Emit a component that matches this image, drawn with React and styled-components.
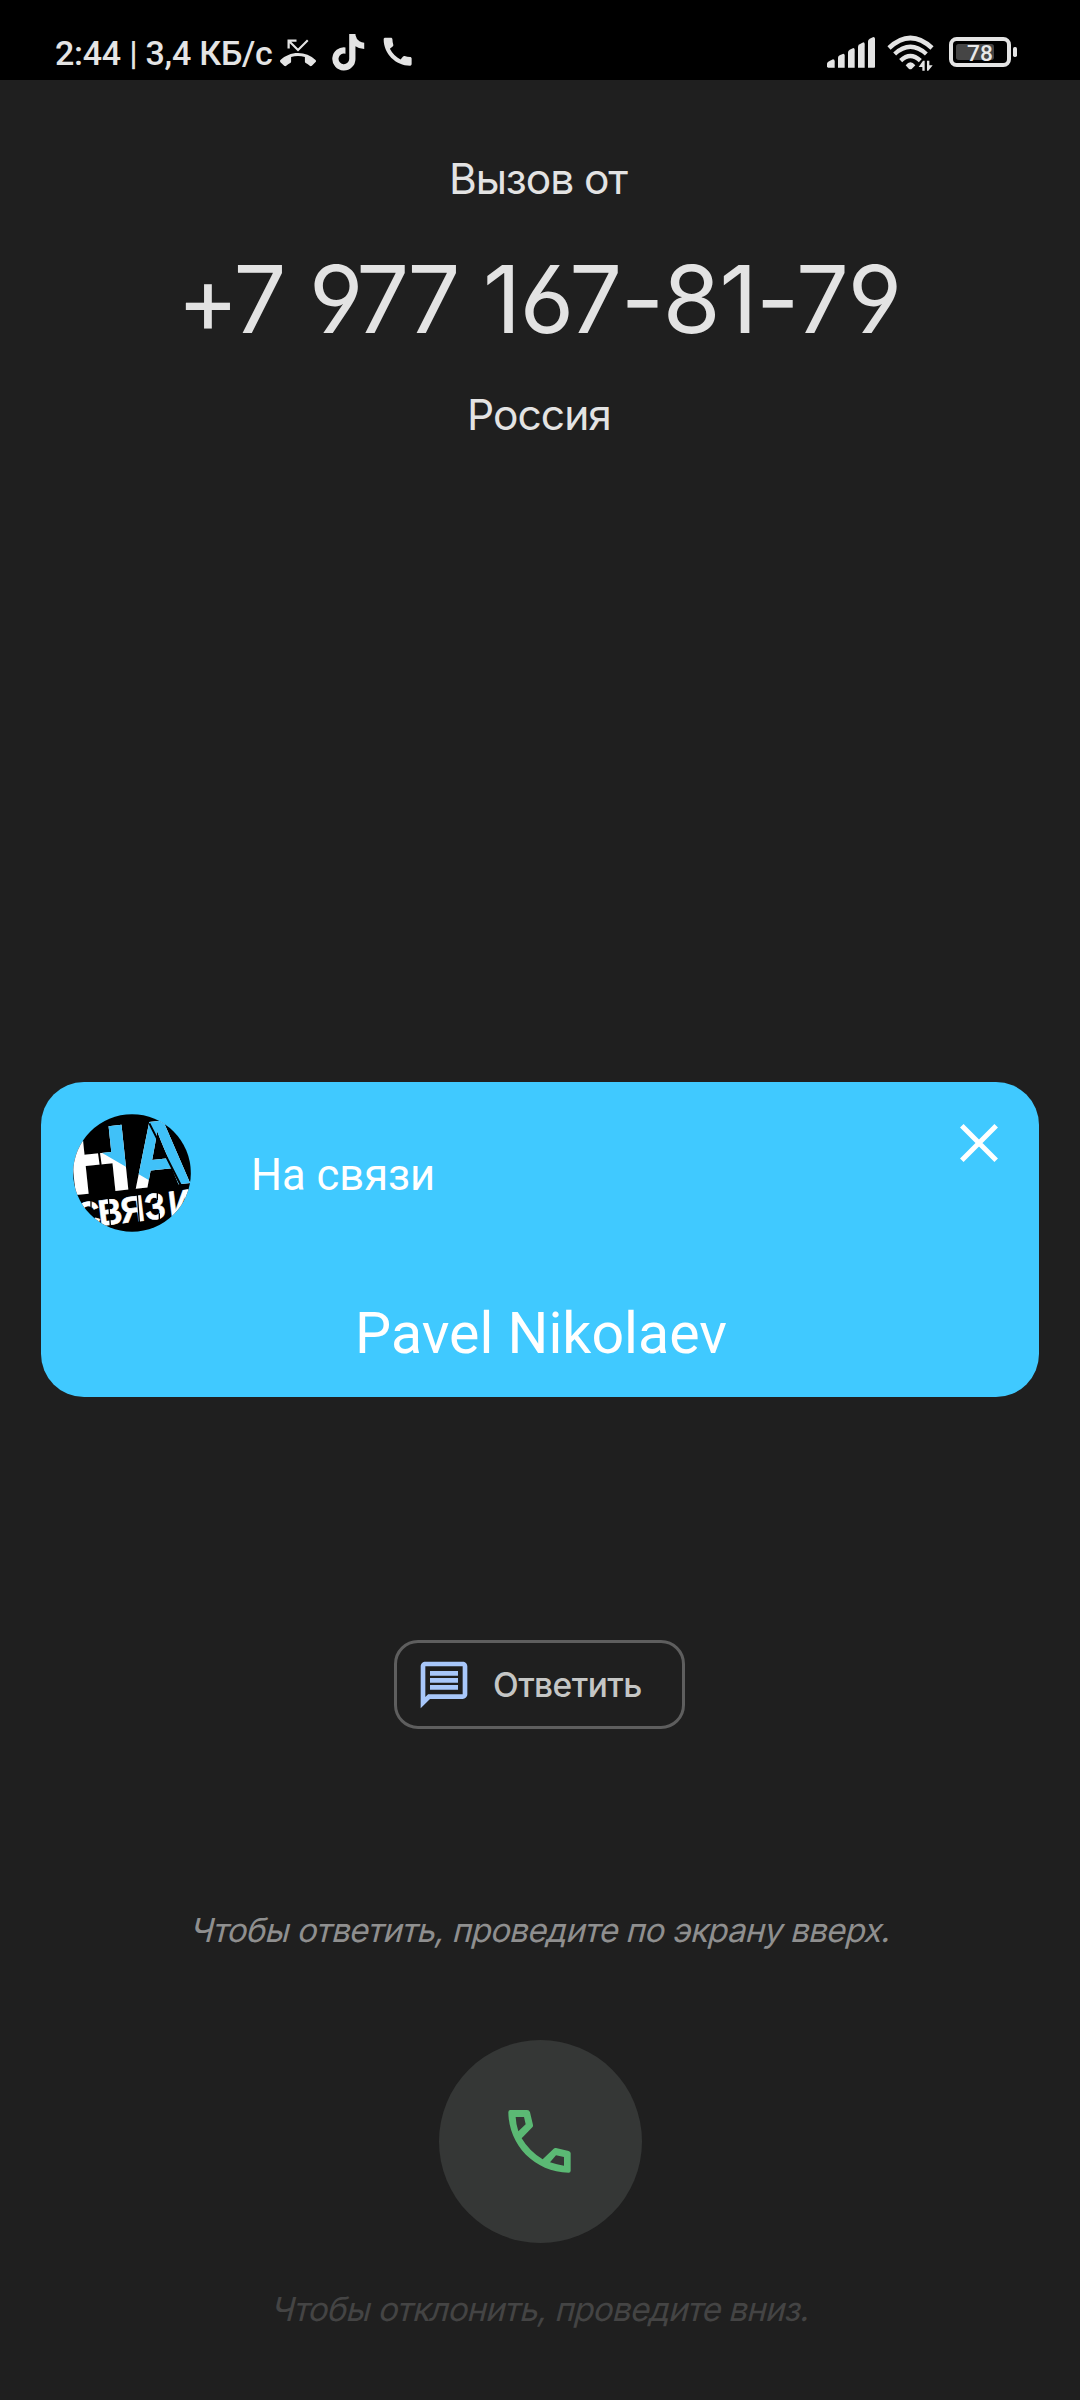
import React from "react";
import styled, { createGlobalStyle } from "styled-components";
import { FaTiktok } from "react-icons/fa";
import { MdCall, MdPhoneMissed, MdOutlineMessage } from "react-icons/md";

const GlobalStyle = createGlobalStyle`
  body {
    margin: 0;
    background: #1f1f1f;
  }
`;

const Screen = styled.main`
  display: flex;
  flex-direction: column;
  align-items: center;
  width: 1080px;
  height: 2400px;
  overflow: hidden;
  background: #1f1f1f;
  font-family: Inter, "Liberation Sans", sans-serif;
`;

const StatusBar = styled.header`
  display: flex;
  box-sizing: border-box;
  width: 100%;
  height: 80px;
  padding: 0 63px 0 55px;
  background: #000;
  color: #e4e4e4;
  justify-content: space-between;
`;

const StatusGroup = styled.div`
  display: flex;
  align-items: flex-start;

  svg {
    display: block;
    flex: none;
  }
`;

const Clock = styled.span`
  width: 225px;
  margin-top: 33px;
  white-space: nowrap;
  font: 500 34px/40px Roboto, sans-serif;
  letter-spacing: -0.25px;
`;

const StatusIcon = styled.span`
  display: block;
  margin: ${(p) => p.$top}px 0 0 ${(p) => p.$left}px;
`;

const CallerHeader = styled.section`
  display: flex;
  flex-direction: column;
  align-items: center;
  padding-top: 69px;
  color: #e3e3e3;
  white-space: nowrap;
`;

const CallerLine = styled.div`
  margin-right: ${(p) => p.$nudge}px;
  font-size: 42.5px;
  line-height: 60px;
  letter-spacing: ${(p) => p.$spacing}px;
`;

const PhoneNumber = styled.h1`
  margin: 35px 2px 31px 0;
  font-size: 93.5px;
  line-height: 110px;
  font-weight: 400;
  letter-spacing: -1.2px;
  font-feature-settings: "cv03", "cv04", "case" 0, "calt" 0;
`;

const DialCode = styled.span`
  letter-spacing: -3.4px;
  word-spacing: 3px;
`;

const CallerCard = styled.section`
  box-sizing: border-box;
  width: 998px;
  height: 315px;
  margin-top: 637px;
  padding: 32px 32px 0;
  border-radius: 43px;
  background: #40c9ff;
  color: #fff;
  font-family: Roboto, sans-serif;
`;

const CardTop = styled.div`
  display: flex;
  height: 118px;
`;

const AppName = styled.div`
  flex: 1;
  padding-left: 60px;
  font-size: 43.5px;
  line-height: 124px;
  white-space: nowrap;
`;

const CloseButton = styled.button`
  width: 56px;
  height: 56px;
  margin: 1px 0 0;
  padding: 9px;
  border: 0;
  background: none;
  color: inherit;

  svg {
    display: block;
  }
`;

const CallerName = styled.div`
  margin-top: 67px;
  padding-left: 2px;
  text-align: center;
  font-size: 57.3px;
  line-height: 70px;
`;

const ReplyButton = styled.button`
  display: flex;
  align-items: center;
  box-sizing: border-box;
  width: 291px;
  height: 89px;
  margin: 243px 1px 0 0;
  padding: 1px 0 0 19px;
  border: 3px solid #5e5e5e;
  border-radius: 24px;
  background: none;
  color: #c5c6c5;
  font: 500 33.5px/50px Inter, sans-serif;
  letter-spacing: -0.55px;
  white-space: nowrap;

  svg {
    flex: none;
    color: #a8c7fa;
    margin: 0 21px 0 0;
  }
`;

const Hint = styled.p`
  margin: ${(p) => p.$top}px 0 0 4px;
  color: ${(p) => p.$color};
  font-size: 33px;
  line-height: 50px;
  white-space: nowrap;
  letter-spacing: -0.7px;
  transform: skewX(-14deg);
`;

const AnswerPuck = styled.button`
  display: grid;
  place-items: center;
  width: 203px;
  height: 203px;
  margin: 85px 0 0;
  padding: 0;
  border: 0;
  border-radius: 50%;
  background: #353736;

  svg {
    margin-right: 1px;
  }
`;

const SignalIcon = () => (
  <svg width="48" height="31" viewBox="81 52 144 93" fill="currentColor">
    <path d="M81 131Q82 127 90 123L99 119Q104 119 104 124V144H85Q81 144 81 140Z" />
    <path d="M114 114Q114 110 119 107L130 102Q134 102 134 107V144H114Z" />
    <path d="M144 98Q144 94 149 90L160 85Q164 85 164 90V144H144Z" />
    <path d="M174 81Q174 77 179 74L190 68Q194 68 194 73V144H174Z" />
    <path d="M204 65Q204 60 209 57L220 52Q225 52 225 57V141Q225 144 222 144H204Z" />
  </svg>
);

const WifiIcon = () => (
  <svg width="47" height="36" viewBox="262 44 141 108" fill="none" stroke="currentColor">
    <path d="M268 83Q332 23 397 83" strokeWidth="14" />
    <path d="M285 101Q332 58 380 101" strokeWidth="13" />
    <path d="M303 121Q332 93 362 121" strokeWidth="13" />
    <path d="M318 135Q332 117 347 135L336 146Q332 148 328 146Z" fill="currentColor" stroke="none" />
    <path d="M357 140L370 121H375V151H368V140ZM399 135H389V121H382V151H386Z" fill="currentColor" stroke="none" />
  </svg>
);

const BatteryIcon = () => (
  <svg width="68" height="30" viewBox="447 51 204 90" fill="none">
    <rect x="453" y="57" width="174" height="78" rx="17" stroke="#e4e4e4" strokeWidth="12" />
    <rect x="468" y="72" width="114" height="48" rx="8" fill="#454545" />
    <rect x="639" y="81" width="12" height="30" rx="5" fill="#e4e4e4" />
    <text x="540" y="123" textAnchor="middle" fill="#e9e9e9" fontFamily="Roboto, sans-serif" fontWeight="500" fontSize="68">
      78
    </text>
  </svg>
);

const CloseIcon = () => (
  <svg width="38" height="38" viewBox="0 0 38 38" stroke="currentColor" strokeWidth="5" fill="none">
    <path d="M1.8 1.8L36.2 36.2M36.2 1.8L1.8 36.2" />
  </svg>
);

const PhoneOutlineIcon = () => (
  <svg width="63" height="63" viewBox="264 270 189 189" fill="#5bb974" fillRule="evenodd">
    <path d="M271 270H321Q328 270 330 277L339 315Q340 319 337 322L305 355Q328 394 368 418L401 386Q404 383 408 384L446 393Q452 395 452 400V452Q452 458 446 458C345 457 266 376 265 277Q265 270 271 270ZM287 291Q288 313 295 334L317 313L312 291ZM408 406L390 427Q411 434 432 437V411Z" />
  </svg>
);

const logoFont = { fontFamily: '"Liberation Sans", sans-serif', fontWeight: 700 };

const AppLogo = () => (
  <svg width="118" height="118" viewBox="129 132 354 354">
    <defs>
      <clipPath id="logoDisc">
        <circle cx="306" cy="309" r="176.5" />
      </clipPath>
      <clipPath id="logoUpper">
        <path d="M120 193L365 335V345H500V120H120Z" />
      </clipPath>
    </defs>
    <g clipPath="url(#logoDisc)" style={logoFont}>
      <rect x="129" y="132" width="354" height="354" fill="#000" />
      <g fill="#fff" fontSize="284">
        <text transform="translate(119 377) rotate(-6) scale(.95 1)">Н</text>
        <text transform="translate(311 357) rotate(-6) scale(.86 1)">А</text>
      </g>
      <g fill="#40c1f8" fontSize="284" clipPath="url(#logoUpper)" aria-hidden="true">
        <text transform="translate(119 377) rotate(-6) scale(.95 1)">Н</text>
        <text transform="translate(311 357) rotate(-6) scale(.86 1)">А</text>
      </g>
      <path d="M206 242L212 285M358 160L452 345" stroke="#000" strokeWidth="6" />
      <text
        transform="translate(143 476) rotate(-7) scale(.9 1)"
        x="0 74 150 230 310"
        fill="#fff"
        stroke="#fff"
        strokeWidth="2"
        fontSize="110"
      >
        СВЯЗИ
      </text>
      <path d="M183 390V412M235 385L241 466M322 375L328 456M382 366V390M388 430V454" stroke="#000" strokeWidth="4" />
    </g>
  </svg>
);

export default function App() {
  return (
    <>
      <GlobalStyle />
      <Screen>
        <StatusBar>
          <StatusGroup>
            <Clock>2:44 | 3,4 КБ/с</Clock>
            <StatusIcon $top={34.5} $left={0}><MdPhoneMissed size={36} /></StatusIcon>
            <StatusIcon $top={34} $left={13.5}><FaTiktok size={36.5} /></StatusIcon>
            <StatusIcon $top={33.3} $left={13}><MdCall size={37.3} /></StatusIcon>
          </StatusGroup>
          <StatusGroup>
            <StatusIcon $top={37} $left={0}><SignalIcon /></StatusIcon>
            <StatusIcon $top={35} $left={12}><WifiIcon /></StatusIcon>
            <StatusIcon $top={37} $left={15}><BatteryIcon /></StatusIcon>
          </StatusGroup>
        </StatusBar>

        <CallerHeader>
          <CallerLine $spacing={-1.1} $nudge={4}>Вызов от</CallerLine>
          <PhoneNumber><DialCode>+7 977 </DialCode>167-81-79</PhoneNumber>
          <CallerLine $spacing={-0.95} $nudge={2}>Россия</CallerLine>
        </CallerHeader>

        <CallerCard>
          <CardTop>
            <AppLogo />
            <AppName>На связи</AppName>
            <CloseButton aria-label="Закрыть"><CloseIcon /></CloseButton>
          </CardTop>
          <CallerName>Pavel Nikolaev</CallerName>
        </CallerCard>

        <ReplyButton>
          <MdOutlineMessage size={56} />
          Ответить
        </ReplyButton>

        <Hint $top={176} $color="#8f8f8f">Чтобы ответить, проведите по экрану вверх.</Hint>
        <AnswerPuck aria-label="Ответить"><PhoneOutlineIcon /></AnswerPuck>
        <Hint $top={41} $color="#444444">Чтобы отклонить, проведите вниз.</Hint>
      </Screen>
    </>
  );
}
